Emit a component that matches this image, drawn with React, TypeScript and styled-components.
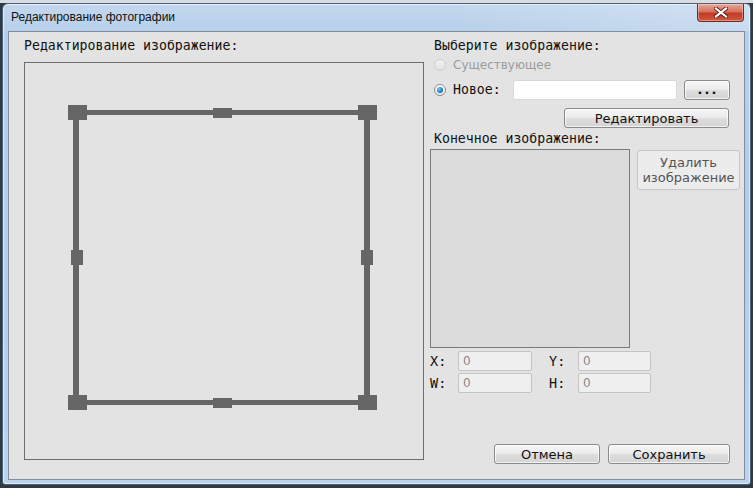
import React from 'react';
import styled, { createGlobalStyle } from 'styled-components';

const GlobalStyle = createGlobalStyle`
  html, body {
    margin: 0;
    padding: 0;
    background: #2e3a46;
  }
  body {
    font-family: 'DejaVu Sans', 'Liberation Sans', sans-serif;
  }
`;

const Desktop = styled.div`
  width: 753px;
  height: 488px;
  box-sizing: border-box;
  padding: 3px 2px 0 2px;
  background: linear-gradient(180deg, #d8dde3 0px, #d8dde3 3px, #2e3a46 3px);
  overflow: hidden;
`;

const Window = styled.div`
  width: 749px;
  height: 482px;
  box-sizing: border-box;
  display: flex;
  flex-direction: column;
  border: 1px solid #4d6075;
  border-radius: 6px 6px 3px 3px;
  background: linear-gradient(180deg, #c3d8ee 0%, #b7cfe9 6%, #b4cde8 50%, #bcd3ec 100%);
  box-shadow: inset 0 0 0 1px rgba(255, 255, 255, 0.55);
`;

const TitleBar = styled.div`
  height: 27px;
  display: flex;
  align-items: flex-start;
  padding-left: 8px;
  padding-right: 6px;
  background: linear-gradient(90deg, rgba(255, 255, 255, 0) 60%, rgba(255, 255, 255, 0.25) 100%);
`;

const Title = styled.div`
  font-family: 'Liberation Sans', 'Noto Sans', sans-serif;
  font-size: 12px;
  line-height: 27px;
  color: #111;
`;

const CloseButton = styled.div`
  margin-left: auto;
  width: 45px;
  height: 17px;
  display: flex;
  align-items: center;
  justify-content: center;
  border: 1px solid #6e2b20;
  border-top: none;
  border-radius: 0 0 4px 4px;
  background: linear-gradient(180deg, #e8a89a 0%, #d7715e 45%, #c23b24 55%, #d05a3e 100%);
  box-shadow: inset 0 0 0 1px rgba(255, 255, 255, 0.35);
`;

const Content = styled.div`
  margin: 0 5px 4px 5px;
  flex: 1;
  box-sizing: border-box;
  border: 1px solid #7f8d9c;
  background: #e3e3e3;
  padding: 6px 0 0 15px;
  display: grid;
  grid-template-columns: 400px 310px;
  column-gap: 6px;
  align-items: start;
`;

const LeftColumn = styled.div`
  display: flex;
  flex-direction: column;
  gap: 8px;
`;

const Heading = styled.div<{ $indent?: number }>`
  font-family: 'DejaVu Sans Mono', 'Liberation Mono', monospace;
  font-size: 13.2px;
  line-height: 16px;
  height: 16px;
  color: #111;
  padding-left: ${(p) => p.$indent ?? 0}px;
  white-space: nowrap;
`;

const Canvas = styled.div`
  width: 400px;
  height: 398px;
  box-sizing: border-box;
  border: 1px solid #6d6d6d;
  background: #e3e3e3;
`;

const RightColumn = styled.div`
  display: flex;
  flex-direction: column;
`;

const RadioRow = styled.div<{ $top: number; $height: number }>`
  margin-top: ${(p) => p.$top}px;
  height: ${(p) => p.$height}px;
  display: flex;
  align-items: center;
  padding-left: 4px;
`;

const Radio = styled.span<{ $checked?: boolean; $disabled?: boolean }>`
  width: 12px;
  height: 12px;
  box-sizing: border-box;
  border-radius: 50%;
  flex: none;
  display: flex;
  align-items: center;
  justify-content: center;
  border: 1px solid ${(p) => (p.$disabled ? '#cfcfcf' : '#8a8a8a')};
  background: ${(p) =>
    p.$disabled ? 'linear-gradient(180deg, #f2f2f2, #e0e0e0)' : 'linear-gradient(180deg, #ffffff, #e8e8e8)'};
  margin-right: 7px;

  &::after {
    content: '';
    display: ${(p) => (p.$checked ? 'block' : 'none')};
    width: 6px;
    height: 6px;
    border-radius: 50%;
    background: radial-gradient(circle at 35% 35%, #7cc8f5 0%, #1f7fc4 55%, #0b4a86 100%);
  }
`;

const RadioLabel = styled.span<{ $disabled?: boolean; $mono?: boolean; $width?: number }>`
  font-family: ${(p) =>
    p.$mono ? "'DejaVu Sans Mono', 'Liberation Mono', monospace" : "'DejaVu Sans', 'Liberation Sans', sans-serif"};
  font-size: ${(p) => (p.$mono ? 13.2 : 12)}px;
  color: ${(p) => (p.$disabled ? '#9c9c9c' : '#111')};
  width: ${(p) => (p.$width ? `${p.$width}px` : 'auto')};
  flex: none;
  white-space: nowrap;
`;

const TextField = styled.input<{ $width: number; $disabled?: boolean }>`
  width: ${(p) => p.$width}px;
  height: 20px;
  box-sizing: border-box;
  border: 1px solid ${(p) => (p.$disabled ? '#c4c4c4' : '#d8d8d8')};
  border-radius: 2px;
  background: ${(p) => (p.$disabled ? '#efefef' : '#ffffff')};
  font-family: 'DejaVu Sans', 'Liberation Sans', sans-serif;
  font-size: 12px;
  color: #8a8a8a;
  padding: 0 4px;
  outline: none;
  flex: none;
`;

const Button = styled.button<{ $width: number; $height?: number }>`
  width: ${(p) => p.$width}px;
  height: ${(p) => p.$height ?? 20}px;
  box-sizing: border-box;
  border: 1px solid #8b8b8b;
  border-radius: 3px;
  background: linear-gradient(180deg, #f6f6f6 0%, #ebebeb 48%, #dddddd 52%, #d4d4d4 100%);
  box-shadow: inset 0 0 0 1px rgba(255, 255, 255, 0.7);
  font-family: 'DejaVu Sans', 'Liberation Sans', sans-serif;
  font-size: 13px;
  color: #111;
  padding: 0;
  flex: none;
  cursor: pointer;
`;

const BrowseButton = styled(Button)`
  margin-left: 7px;
  font-weight: bold;
  letter-spacing: 2px;
  padding-left: 2px;
`;

const EditButton = styled(Button)`
  margin-top: 8px;
  margin-left: 134px;
`;

const PreviewRow = styled.div`
  margin-top: 2px;
  display: flex;
  align-items: flex-start;
  gap: 7px;
`;

const Preview = styled.div`
  width: 200px;
  height: 199px;
  box-sizing: border-box;
  border: 1px solid #7a7a7a;
  background: #dcdcdc;
`;

const DeleteButton = styled.button`
  margin-top: 1px;
  width: 103px;
  height: 40px;
  box-sizing: border-box;
  border: 1px solid #c6c6c6;
  border-radius: 3px;
  background: #ececec;
  font-family: 'DejaVu Sans', 'Liberation Sans', sans-serif;
  font-size: 13px;
  line-height: 15px;
  color: #555;
  padding: 0;
`;

const CoordRow = styled.div<{ $top: number }>`
  margin-top: ${(p) => p.$top}px;
  height: 20px;
  display: flex;
  align-items: center;
`;

const CoordLabel = styled.span<{ $width: number; $gap?: number }>`
  font-family: 'DejaVu Sans Mono', 'Liberation Mono', monospace;
  font-size: 13.5px;
  color: #111;
  width: ${(p) => p.$width}px;
  margin-left: ${(p) => p.$gap ?? 0}px;
  flex: none;
`;

const Footer = styled.div`
  margin-top: 51px;
  margin-left: 64px;
  display: flex;
  gap: 8px;
`;

const CropFrame = () => (
  <svg width="398" height="396" viewBox="0 0 398 396">
    <g fill="#666666">
      <rect x="48" y="47" width="294" height="5" />
      <rect x="48" y="337" width="294" height="5" />
      <rect x="48" y="47" width="6" height="295" />
      <rect x="339" y="47" width="6" height="295" />
      <rect x="43" y="42" width="19" height="15" />
      <rect x="333" y="42" width="19" height="15" />
      <rect x="43" y="332" width="19" height="15" />
      <rect x="333" y="332" width="19" height="15" />
      <rect x="188" y="45" width="19" height="10" />
      <rect x="188" y="335" width="19" height="10" />
      <rect x="46" y="187" width="12" height="15" />
      <rect x="336" y="187" width="12" height="15" />
    </g>
  </svg>
);

const CloseGlyph = () => (
  <svg width="14" height="11" viewBox="0 0 14 11">
    <path d="M2 1.5 L12 9.5 M12 1.5 L2 9.5" stroke="#5a1e14" strokeWidth="4" strokeLinecap="square" />
    <path d="M2 1.5 L12 9.5 M12 1.5 L2 9.5" stroke="#ffffff" strokeWidth="2.2" strokeLinecap="square" />
  </svg>
);

const App = () => {
  return (
    <Desktop>
      <GlobalStyle />
      <Window>
        <TitleBar>
          <Title>Редактирование фотографии</Title>
          <CloseButton>
            <CloseGlyph />
          </CloseButton>
        </TitleBar>
        <Content>
          <LeftColumn>
            <Heading>Редактирование изображение:</Heading>
            <Canvas>
              <CropFrame />
            </Canvas>
          </LeftColumn>
          <RightColumn>
            <Heading $indent={4}>Выберите изображение:</Heading>
            <RadioRow $top={3} $height={16}>
              <Radio $disabled />
              <RadioLabel $disabled>Существующее</RadioLabel>
            </RadioRow>
            <RadioRow $top={6} $height={21}>
              <Radio $checked />
              <RadioLabel $mono $width={60}>
                Новое:
              </RadioLabel>
              <TextField $width={164} defaultValue="" />
              <BrowseButton $width={46}>...</BrowseButton>
            </RadioRow>
            <EditButton $width={165}>Редактировать</EditButton>
            <Heading $indent={4} style={{ marginTop: 3 }}>
              Конечное изображение:
            </Heading>
            <PreviewRow>
              <Preview />
              <DeleteButton>
                Удалить
                <br />
                изображение
              </DeleteButton>
            </PreviewRow>
            <CoordRow $top={3}>
              <CoordLabel $width={28}>X:</CoordLabel>
              <TextField $width={74} $disabled defaultValue="0" />
              <CoordLabel $width={29} $gap={17}>
                Y:
              </CoordLabel>
              <TextField $width={73} $disabled defaultValue="0" />
            </CoordRow>
            <CoordRow $top={2}>
              <CoordLabel $width={28}>W:</CoordLabel>
              <TextField $width={74} $disabled defaultValue="0" />
              <CoordLabel $width={29} $gap={17}>
                H:
              </CoordLabel>
              <TextField $width={73} $disabled defaultValue="0" />
            </CoordRow>
            <Footer>
              <Button $width={106}>Отмена</Button>
              <Button $width={122}>Сохранить</Button>
            </Footer>
          </RightColumn>
        </Content>
      </Window>
    </Desktop>
  );
};

export default App;
